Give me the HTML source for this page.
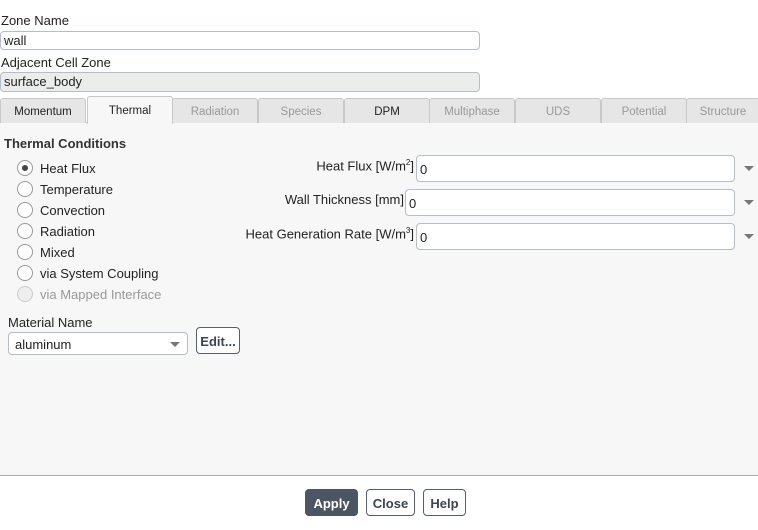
<!DOCTYPE html>
<html><head><style>
*{box-sizing:border-box;margin:0;padding:0}
body{width:758px;height:530px;background:#fff;font-family:"Liberation Sans",sans-serif;font-size:13px;color:#222;position:relative;overflow:hidden}
.a{position:absolute;white-space:nowrap}
.inp{position:absolute;border:1px solid #b8bcc4;border-radius:4px;background:#fff;padding-left:3px;line-height:17px}
.tab{position:absolute;top:98px;height:25px;width:86px;background:#e6e6e6;border:1px solid #c8c8c8;border-bottom:none;text-align:center;line-height:27px;color:#999;font-size:11.5px;border-radius:3px 3px 0 0}
.rad{position:absolute;left:17px;width:16px;height:16px;border:1px solid #999;border-radius:50%;background:#fff}
.lbl{position:absolute;left:40px}
.dd{position:absolute;width:0;height:0;border-left:5px solid transparent;border-right:5px solid transparent;border-top:5px solid #777}
.btn{position:absolute;top:489px;height:27px;border:1px solid #555e6a;border-radius:4px;font-weight:bold;font-size:13px;text-align:center;line-height:27px;color:#3a4452;background:#fff}
</style></head><body>
<div class="a" style="left:1px;top:13px">Zone Name</div>
<div class="inp" style="left:0;top:31px;width:480px;height:19px">wall</div>
<div class="a" style="left:1px;top:55px">Adjacent Cell Zone</div>
<div class="inp" style="left:0;top:72px;width:480px;height:20px;background:#ececec">surface_body</div>
<div style="position:absolute;left:0;top:123px;width:758px;height:352px;background:#f7f7f7"></div>
<div style="position:absolute;left:0;top:122px;width:758px;height:1px;background:#c8c8c8"></div>
<div class="tab" style="left:0;color:#222">Momentum</div>
<div class="tab" style="left:87px;top:96px;height:28px;background:#f7f7f7;color:#222;line-height:29px">Thermal</div>
<div class="tab" style="left:172px">Radiation</div>
<div class="tab" style="left:258px">Species</div>
<div class="tab" style="left:344px;color:#222">DPM</div>
<div class="tab" style="left:429px">Multiphase</div>
<div class="tab" style="left:515px">UDS</div>
<div class="tab" style="left:601px">Potential</div>
<div class="tab" style="left:686px;width:74px">Structure</div>
<div class="a" style="left:4px;top:136px;font-weight:bold;font-size:13px;color:#333">Thermal Conditions</div>
<div class="rad" style="top:160px"><div style="position:absolute;left:4px;top:4px;width:6px;height:6px;border-radius:50%;background:#444"></div></div>
<div class="lbl" style="top:161px">Heat Flux</div>
<div class="rad" style="top:181px"></div><div class="lbl" style="top:182px">Temperature</div>
<div class="rad" style="top:202px"></div><div class="lbl" style="top:203px">Convection</div>
<div class="rad" style="top:223px"></div><div class="lbl" style="top:224px">Radiation</div>
<div class="rad" style="top:244px"></div><div class="lbl" style="top:245px">Mixed</div>
<div class="rad" style="top:265px"></div><div class="lbl" style="top:266px">via System Coupling</div>
<div class="rad" style="top:286px;border-color:#ccc;background:#eee"></div><div class="lbl" style="top:287px;color:#999">via Mapped Interface</div>
<div class="a" style="right:344px;top:158px">Heat Flux [W/m<sup style="font-size:8px">2</sup>]</div>
<div class="inp" style="left:416px;top:155px;width:319px;height:27px;line-height:28px">0</div>
<div class="dd" style="left:744px;top:166px"></div>
<div class="a" style="right:354px;top:192px">Wall Thickness [mm]</div>
<div class="inp" style="left:405px;top:189px;width:330px;height:27px;line-height:28px">0</div>
<div class="dd" style="left:744px;top:200px"></div>
<div class="a" style="right:344px;top:226px">Heat Generation Rate [W/m<sup style="font-size:8px">3</sup>]</div>
<div class="inp" style="left:416px;top:223px;width:319px;height:27px;line-height:28px">0</div>
<div class="dd" style="left:744px;top:234px"></div>
<div class="a" style="left:8px;top:315px">Material Name</div>
<div class="inp" style="left:8px;top:332px;width:180px;height:23px;line-height:23px;padding-left:6px">aluminum</div>
<div class="dd" style="left:170px;top:342px"></div>
<div class="btn" style="left:196px;top:327px;width:44px;height:27px;line-height:27px">Edit...</div>
<div style="position:absolute;left:0;top:475px;width:758px;height:1px;background:#aaa"></div>
<div class="btn" style="left:305px;width:53px;background:#4b5563;color:#fff;border-color:#4b5563">Apply</div>
<div class="btn" style="left:366px;width:49px">Close</div>
<div class="btn" style="left:423px;width:43px">Help</div>
</body></html>
